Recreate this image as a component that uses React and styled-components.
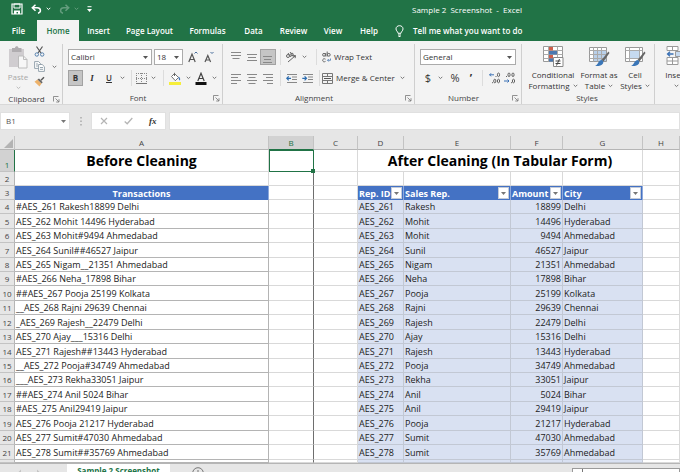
import React from "react";
import styled, { createGlobalStyle, css } from "styled-components";

const GREEN = "#217346";
const BLUE = "#4472c4";
const UI = '"Open Sans", "Noto Sans", sans-serif';

const GlobalStyle = createGlobalStyle`
  * { box-sizing: border-box; }
  body { margin: 0; height: 100vh; overflow: hidden; background: #e6e6e6; font: 8px/12px ${UI}; color: #333; }
  button, input, select { font: inherit; color: inherit; margin: 0; padding: 0; border: 0; border-radius: 0; background: none; }
  svg { display: block; flex: none; }
`;

const Page = styled.div`
  height: 100vh;
  overflow: hidden;
`;

const TitleBar = styled.header`
  height: 20px;
  background: ${GREEN};
  color: #fff;
  display: grid;
  grid-template-columns: 412px 1fr;
  align-items: center;
`;

const QuickAccess = styled.div`
  display: flex;
  align-items: center;
  padding: 0 0 2px 11px;
  gap: 8px;
`;

const QuickButton = styled.button`
  display: flex;
  align-items: center;
  gap: 4px;
  color: #fff;
  opacity: ${(p) => (p.disabled ? 0.3 : 1)};
`;

const WindowTitle = styled.span`
  white-space: pre;
`;

const TabStrip = styled.nav`
  height: 21px;
  background: ${GREEN};
  display: flex;
  align-items: stretch;
`;

const RibbonTab = styled.button`
  flex: none;
  width: ${(p) => p.$w}px;
  white-space: nowrap;
  font-weight: 600;
  color: ${(p) => (p.$active ? GREEN : "#fff")};
  background: ${(p) => (p.$active ? "#f3f3f3" : "transparent")};
`;

const TellMe = styled.button`
  display: flex;
  align-items: center;
  gap: 9px;
  margin-left: 9px;
  color: #fff;
  font-weight: 600;
  white-space: nowrap;
`;

const Ribbon = styled.div`
  display: flex;
  height: 64px;
  padding-top: 3px;
  background: #f3f3f3;
  border-bottom: 1px solid #d8d8d8;
  overflow: hidden;
`;

const Group = styled.section`
  flex: none;
  width: ${(p) => p.$w}px;
  padding: 0 5px;
  display: flex;
  flex-direction: column;
  border-right: 1px solid #cfcfcf;
`;

const GroupBody = styled.div`
  height: 48px;
  display: flex;
  flex-direction: ${(p) => (p.$column ? "column" : "row")};
  gap: ${(p) => (p.$column ? 5 : 0)}px;
  padding-top: ${(p) => (p.$column ? 5 : 0)}px;
`;

const GroupFooter = styled.footer`
  display: grid;
  grid-template-columns: 1fr auto;
  align-items: center;
  text-align: center;
  height: 12px;
  margin: 1px -3px 0 -5px;
  color: #444;
`;

const Launcher = styled.button`
  width: 7px;
`;

const ToolRow = styled.div`
  display: grid;
  grid-template-columns: ${(p) => p.$cols};
  height: 16px;
  align-items: center;
`;

const Tool = styled.button`
  height: 16px;
  display: flex;
  align-items: center;
  justify-content: ${(p) => (p.$start ? "flex-start" : "center")};
  gap: 3px;
  white-space: nowrap;
  ${(p) => p.$pressed && css`background: #c5c5c5; outline: 1px solid #a2a2a2; outline-offset: -1px;`}
  ${(p) => p.$bold && css`font-weight: 700;`}
  ${(p) => p.$italic && css`font: italic 700 9px/12px "Liberation Serif", serif;`}
  ${(p) => p.$underline && css`text-decoration: underline; font-weight: 600;`}
  ${(p) => p.$big && css`font-size: 11px;`}
`;

const Separator = styled.span`
  width: 1px;
  height: 16px;
  background: #dcdcdc;
  justify-self: center;
`;

const Combo = styled.span`
  display: grid;
  height: 16px;
  margin-right: ${(p) => p.$gap || 0}px;
  border: 1px solid #ababab;
  background: #fff;
  align-items: center;
  > * { grid-area: 1 / 1; }
  > svg { justify-self: end; margin-right: 3px; pointer-events: none; }
`;

const ComboSelect = styled.select`
  appearance: none;
  width: 100%;
  height: 14px;
  padding-left: 2px;
`;

const ClipboardTools = styled.div`
  display: flex;
  flex-direction: column;
  padding-left: 3px;
  > button { height: 15px; gap: 7px; }
`;

const BigTool = styled.button`
  width: ${(p) => p.$w}px;
  flex: none;
  display: flex;
  flex-direction: column;
  align-items: center;
  padding-top: 2px;
  line-height: 11px;
  white-space: nowrap;
  color: ${(p) => (p.disabled ? "#a8a8a8" : "#333")};
  > svg { margin-bottom: 2px; }
`;

const BigToolLine = styled.span`
  display: flex;
  align-items: center;
  gap: 3px;
  min-height: 11px;
`;

const FormulaBar = styled.div`
  display: grid;
  grid-template-columns: 70px 21px 75px 1fr;
  height: 31px;
  padding: 7px 0 6px;
`;

const NameBox = styled(Combo)`
  height: 18px;
  border-color: #e0e0e0;
`;

const NameInput = styled.input`
  width: 100%;
  padding-left: 5px;
  color: #555;
`;

const FormulaActions = styled.div`
  display: grid;
  grid-template-columns: repeat(3, 1fr);
  background: #fff;
  border: 1px solid #e0e0e0;
`;

const FormulaInput = styled.input`
  min-width: 0;
  margin-left: 3px;
  background: #fff;
  border: 1px solid #e0e0e0;
`;

const Grip = styled.span`
  place-self: center;
`;

const Sheet = styled.table`
  width: 100%;
  table-layout: fixed;
  border-collapse: separate;
  border-spacing: 0;
  background: #fff;
  font: 9px/13px ${UI};
  color: #222;
`;

const ColumnHead = styled.th`
  height: 14px;
  padding: 0;
  font: 8px/13px ${UI};
  color: ${(p) => (p.$active ? GREEN : "#444")};
  background: ${(p) => (p.$active ? "#d2d2d2" : "#e6e6e6")};
  border-right: 1px solid #c3c3c3;
  border-bottom: 1px solid ${(p) => (p.$active ? GREEN : "#b5b5b5")};
`;

const Corner = styled(ColumnHead)`
  > svg { margin: 2px 0 0 4px; }
`;

const RowHead = styled.th`
  padding: 0;
  font: 8px/12px ${UI};
  text-align: center;
  vertical-align: bottom;
  color: ${(p) => (p.$active ? GREEN : "#444")};
  background: ${(p) => (p.$active ? "#d2d2d2" : "#e6e6e6")};
  border-right: 1px solid ${(p) => (p.$active ? GREEN : "#b5b5b5")};
  border-bottom: 1px solid #c3c3c3;
`;

const Row = styled.tr`
  height: ${(p) => p.$h}px;
`;

const Cell = styled.td`
  padding: 0 1px;
  white-space: nowrap;
  overflow: hidden;
  vertical-align: middle;
  border-right: 1px solid #d9d9d9;
  border-bottom: 1px solid #d9d9d9;
  ${(p) => p.$edge && css`border-right-color: #6e6e6e;`}
  ${(p) => p.$boxed && css`border-color: #b4b4b4;`}
  ${(p) => p.$banded && css`background: #d9e1f2; border-color: #c2c8d4;`}
  ${(p) => p.$number && css`text-align: right;`}
`;

const TitleCell = styled(Cell)`
  font-size: 14px;
  line-height: 20px;
  font-weight: 700;
  color: #000;
  text-align: center;
`;

const SelectedCell = styled(Cell)`
  position: relative;
  overflow: visible;
  border: 0;
  outline: 1px solid ${GREEN};
  outline-offset: -1px;
  &::after {
    content: "";
    position: absolute;
    right: -1px;
    bottom: -1px;
    width: 4px;
    height: 4px;
    background: ${GREEN};
  }
`;

const HeadCell = styled.th`
  padding: 0 1px;
  text-align: ${(p) => (p.$center ? "center" : "left")};
  white-space: nowrap;
  color: #fff;
  background: ${BLUE};
  border-right: 1px solid #8ea9db;
`;

const HeadContent = styled.div`
  display: flex;
  align-items: center;
  justify-content: space-between;
`;

const FilterButton = styled.button`
  width: 11px;
  height: 12px;
  background: #fff;
  border: 1px solid #c4cbd8;
  display: grid;
  place-items: center;
`;

const SheetBar = styled.footer`
  display: grid;
  grid-template-columns: 67px 103px 55px 1fr 108px;
  height: 22px;
  border-top: 1px solid #b5b5b5;
  overflow: hidden;
`;

const SheetArrows = styled.div`
  display: flex;
  justify-content: center;
  gap: 14px;
  padding: 5px 10px 0 0;
`;

const SheetTab = styled.button`
  background: #fff;
  color: ${GREEN};
  font-weight: 700;
  white-space: nowrap;
  align-self: stretch;
  padding-bottom: 7px;
`;

const AddSheet = styled.button`
  align-self: start;
  justify-self: center;
  padding-top: 3px;
`;

const ScrollTrack = styled.div`
  margin-top: 4px;
  height: 14px;
  border: 1px solid #9a9a9a;
  background: #fff;
`;

const ScrollButton = styled.button`
  width: 10px;
  height: 12px;
  display: grid;
  place-items: center;
  border-right: 1px solid #777;
`;

const Chevron = ({ color = "#777" }) => (
  <svg width="5" height="4" viewBox="0 0 5 4"><path d="M.7.8 2.5 2.6 4.3.8" fill="none" stroke={color} /></svg>
);
const Arrow = ({ color = "#555" }) => (
  <svg width="5" height="3" viewBox="0 0 5 3"><path d="M0 0h5L2.500 3z" fill={color} /></svg>
);
const LauncherIcon = () => (
  <svg width="7" height="7" viewBox="0 0 7 7" fill="none" stroke="#777" strokeWidth=".8"><path d="M.5 5.500V.5h5M2.500 2.500 6 6M6 3.200V6H3.200" /></svg>
);
const SaveIcon = () => (
  <svg width="12" height="12" viewBox="0 0 12 12"><path d="M1 1h10v10H1z" fill="none" stroke="#fff" strokeWidth="1.200" /><path d="M3 1h6v4H3z" fill="none" stroke="#fff" /><path d="M3 7.500h6V11H7V9H5.500v2H3z" fill="#fff" /></svg>
);
const UndoIcon = ({ flip }) => (
  <svg width="11" height="10" viewBox="0 0 11 10"><g transform={flip ? "matrix(-1 0 0 1 11 0)" : undefined} fill="none" stroke="#fff" strokeWidth="1.500"><path d="M4.500.7 1.300 3.700l3.200 3M1.500 3.700h4.700c4 0 4.300 4.600.8 5.500" /></g></svg>
);
const CustomizeIcon = () => (
  <svg width="5" height="6" viewBox="0 0 5 6"><path d="M.5.7h4" stroke="#fff" /><path d="M0 3h5L2.500 6z" fill="#fff" /></svg>
);
const BulbIcon = () => (
  <svg width="9" height="12" viewBox="0 0 9 12" fill="none" stroke="#fff"><path d="M3 8.300C3 6.500 1 6 1 3.900 1 1.900 2.600.7 4.500.7S8 1.900 8 3.900C8 6 6 6.500 6 8.300zM3 10h3M3.500 11.500h2" /></svg>
);
const PasteIcon = () => (
  <svg width="20" height="23" viewBox="0 0 20 23"><path d="M1 3h15v18H1z" fill="#d0cdd0" /><path d="M4 2h3c0-2.500 3.500-2.500 3.500 0h3v4H4z" fill="#b0adb0" /><path d="M10.500 10h5l3.500 3.500v8.500h-8.500z" fill="#f7f7f7" stroke="#bdbdbd" /><path d="M15.500 10v3.500H19" fill="none" stroke="#bdbdbd" /></svg>
);
const CutIcon = () => (
  <svg width="11" height="11" viewBox="0 0 11 11" fill="none"><path d="M2.500.5 7 7M8.500.5 4 7" stroke="#555" strokeWidth="1.200" /><circle cx="2.800" cy="8.500" r="1.700" stroke="#5580ad" /><circle cx="8.200" cy="8.500" r="1.700" stroke="#5580ad" /></svg>
);
const CopyIcon = () => (
  <svg width="11" height="11" viewBox="0 0 11 11" fill="#fff" stroke="#8a9aa5" strokeWidth=".9"><path d="M.6.6h4l1.800 1.800v5H.6z" /><path d="M4.600 3.500h3.600l2.200 2.200v4.700H4.600zM6 6.500h3M6 8.300h3M2 3h2M2 5h2" /></svg>
);
const BrushIcon = () => (
  <svg width="11" height="11" viewBox="0 0 11 11"><path d="m.5 5.800 3-2.300 4 4-2 3z" fill="#edb26b" /><path d="m3.500 3.500 1.500-1 3.700 3.700-1.200 1.300z" fill="#666" /><path d="m6.500 3.800 3-3 1 1-3 3z" fill="#555" /></svg>
);
const GrowFont = ({ shrink }) => (
  <svg width="10" height="12" viewBox="0 0 10 12" fill="none" stroke="#555"><path d={shrink ? "M1 11 3.800 4.500 6.600 11M2 9h3.600" : "M.8 11 4 3l3.200 8M2 8.500h4"} strokeWidth="1.200" /><path d={shrink ? "M6.500 1 8 2.500 9.500 1" : "M6.500 2.500 8 1l1.500 1.500"} stroke="#4a6f9c" /></svg>
);
const BordersIcon = () => (
  <svg width="11" height="11" viewBox="0 0 11 11" fill="none" stroke="#888"><path d="M.5 0v11M5.500 0v11M10.500 0v11M0 .5h11M0 5.500h11" strokeDasharray="1 1" /><path d="M0 10.500h11" stroke="#777" /></svg>
);
const FillIcon = () => (
  <svg width="12" height="13" viewBox="0 0 12 13"><path d="m2.500 4.500 3-3 4 4-3.200 3.200z" fill="#fff" stroke="#666" strokeWidth=".9" /><path d="M5.500 4V.8" stroke="#666" /><path d="M9.500 4.500c2 1.500 2 3 1.200 4-.8-.5-1.200-2-1.200-4z" fill="#3a71b5" /><path d="M0 10h12v3H0z" fill="#f6ee3a" /></svg>
);
const FontColorIcon = () => (
  <svg width="12" height="13" viewBox="0 0 12 13"><path d="M2.800 9 6 1.200 9.200 9M4 6.500h4" fill="none" stroke="#444" strokeWidth="1.200" /><path d="M.5 10h11v3H.5z" fill="#111" /></svg>
);
const LINES = {
  top: "M0 1.500h10M0 4.500h10M1.500 7.500h7",
  middle: "M0 3.500h10M1 6.500h8M0 9.500h10",
  bottom: "M0 5.500h9M1 8.500h7M0 11.500h9",
  left: "M0 2.500h10M0 5.500h7M0 8.500h10M0 11.500h6",
  center: "M0 2.500h10M1.500 5.500h7M0 8.500h10M1.500 11.500h7",
  right: "M0 2.500h10M3 5.500h7M0 8.500h10M4 11.500h6",
};
const AlignIcon = ({ kind }) => (
  <svg width="10" height="13" viewBox="0 0 10 13"><path d={LINES[kind]} stroke="#888" fill="none" /></svg>
);
const OrientationIcon = () => (
  <svg width="12" height="12" viewBox="0 0 12 12" fill="none" stroke="#666"><circle cx="3" cy="5" r="1.500" /><path d="m3 2 3 4M5 1l3.500 4.500" /><circle cx="7" cy="3.500" r="1.300" /><path d="m3 11 7-6M7.800 4.800l2.700-.3-.4 2.700" /></svg>
);
const IndentIcon = ({ out }) => (
  <svg width="12" height="11" viewBox="0 0 12 11" fill="none"><path d="M1 1.500h10M6 4h5M6 6.500h5M1 9.500h10" stroke="#888" /><path d={out ? "M5 5.300H1M2.700 3.300.8 5.300l1.900 2" : "M.3 5.300h4M2.600 3.300l1.900 2-1.900 2"} stroke="#2b6cb0" strokeWidth="1.200" /></svg>
);
const WrapIcon = () => (
  <svg width="9" height="12" viewBox="0 0 9 12" fill="none" stroke="#666"><circle cx="2" cy="3.800" r="1.400" /><path d="M3.700 2v3.500M5.200.5v5" /><circle cx="6.800" cy="3.800" r="1.400" /><path d="M3.500 8.200C2 7.200.7 8 .7 9.300s1.300 2 2.800 1.100" /><path d="M8.500 7.500v1.800h-3M6.800 8 5.500 9.300l1.300 1.300" stroke="#4a7ab0" strokeWidth=".8" /></svg>
);
const MergeIcon = () => (
  <svg width="11" height="11" viewBox="0 0 11 11" fill="none" stroke="#777"><path d="M.5.5h10v10H.5zM.5 3.500h10M.5 7.500h10M5.500.5v3M5.500 7.500v3" /><path d="M2 5.500h7" stroke="#555" /></svg>
);
const DecimalIcon = ({ less }) => (
  <svg width="12" height="12" viewBox="0 0 12 12" fill="none">
    <g stroke="#555" strokeWidth=".9">
      {less ? <><ellipse cx="5" cy="2.800" rx="1.100" ry="1.800" /><ellipse cx="9" cy="2.800" rx="1.100" ry="1.800" /><ellipse cx="9.500" cy="9" rx="1.100" ry="1.800" /><path d="M2 4.500h1M7 10.700h1" /></> : <><ellipse cx="9.500" cy="2.800" rx="1.100" ry="1.800" /><ellipse cx="5.800" cy="9" rx="1.100" ry="1.800" /><ellipse cx="9.500" cy="9" rx="1.100" ry="1.800" /><path d="M6.500 4.500h1M3 10.700h1" /></>}
    </g>
    <path d={less ? "M0 9h5M3.500 7.500 5 9l-1.500 1.500" : "M5 2.800H.6M2 1.300.6 2.800 2 4.300"} stroke="#3a71b5" />
  </svg>
);
const ConditionalIcon = () => (
  <svg width="21" height="21" viewBox="0 0 21 21" fill="none"><path d="M.5.5h19v15H.5z" fill="#fff" stroke="#999" /><path d="M5.500.5v15M14.500.5v15M.5 4.500h19M.5 8.500h19M.5 12.500h19" stroke="#aaa" /><path d="M6 1h4v3.500H6zM6 9h4v3.500H6z" fill="#cf5f4b" /><path d="M6 5h8v3.500H6zM6 12.500h5v3H6z" fill="#4a78b0" /><path d="M10.500 11.500h9.500v9h-9.500z" fill="#fff" stroke="#888" /><path d="M12.500 15h5M12.500 17.500h5M16.500 13l-3 6.500" stroke="#444" /></svg>
);
const TableStyleIcon = ({ cell }) => (
  <svg width="21" height="21" viewBox="0 0 21 21" fill="none"><path d="M.5 1.500h17v14H.5z" fill="#fff" stroke="#999" />{cell ? <path d="M4 5h10v7H4z" fill="#c6daf0" /> : <path d="M5 5h12v10H5z" fill="#b9d0ea" />}<path d={cell ? "M4.500 1.500v14M14.500 1.500v14M.5 4.500h17M.5 12.500h17" : "M4.500 1.500v14M8.500 1.500v14M12.500 1.500v14M.5 4.500h17M.5 8.500h17M.5 12.500h17"} stroke="#aaa" /><path d="M19.500 5.500 20.500 7l-6 8.500-2-1.500z" fill="#666" /><path d="M12.300 14c2 .3 2.500 2 1.700 3.500-1.500 2.500-5 2.800-8 2.500 3-1 3-5 6.300-6z" fill="#3a76b8" /></svg>
);
const InsertIcon = () => (
  <svg width="20" height="21" viewBox="0 0 20 21" fill="#fff" stroke="#999"><path d="M1 .5h11v4H1zM6.500.5v4M1 11.500h11v7H1zM6.500 11.500v7M1 15h11" /><path d="M9.500 5.500H20v5H9.500z" fill="#c6daf0" /><path d="M7.500 8H1.500M4 5.700 1.500 8 4 10.300" fill="none" stroke="#3a71b5" strokeWidth="1.300" /></svg>
);
const CancelIcon = () => (
  <svg width="8" height="8" viewBox="0 0 8 8"><path d="m1 1 6 6M7 1 1 7" stroke="#b5b5b5" strokeWidth="1.200" /></svg>
);
const CheckIcon = () => (
  <svg width="9" height="8" viewBox="0 0 9 8"><path d="m.7 4.500 2.500 2.300L8.300 1" fill="none" stroke="#b5b5b5" strokeWidth="1.300" /></svg>
);
const GripIcon = () => (
  <svg width="2" height="10" viewBox="0 0 2 10"><path d="M1 1v9" stroke="#aaa" strokeWidth="1.500" strokeDasharray="1.500 2" /></svg>
);
const CornerIcon = () => (
  <svg width="9" height="9" viewBox="0 0 9 9"><path d="M9 0v9H0z" fill="#b3b3b3" /></svg>
);
const SheetArrow = ({ right, color = "#c4c4c4" }) => (
  <svg width="5" height="7" viewBox="0 0 5 7"><path d={right ? "M1 .5v6l3-3z" : "M4 .5v6l-3-3z"} fill={color} /></svg>
);
const AddIcon = () => (
  <svg width="12" height="12" viewBox="0 0 12 12" fill="none" stroke="#777"><circle cx="6" cy="6" r="5.300" /><path d="M6 3v6M3 6h6" /></svg>
);

const TABS = [["File", 37], ["Home", 42], ["Insert", 39], ["Page Layout", 63], ["Formulas", 53], ["Data", 39], ["Review", 41], ["View", 38], ["Help", 34]];
const WIDTHS = [15, 254, 45, 44, 46, 107, 52, 80];
const ROWS = [
  ["#AES_261 Rakesh18899 Delhi", "AES_261", "Rakesh", 18899, "Delhi"],
  ["AES_262 Mohit 14496 Hyderabad", "AES_262", "Mohit", 14496, "Hyderabad"],
  ["AES_263 Mohit#9494 Ahmedabad", "AES_263", "Mohit", 9494, "Ahmedabad"],
  ["AES_264 Sunil##46527 Jaipur", "AES_264", "Sunil", 46527, "Jaipur"],
  ["AES_265 Nigam__21351 Ahmedabad", "AES_265", "Nigam", 21351, "Ahmedabad"],
  ["#AES_266 Neha_17898 Bihar", "AES_266", "Neha", 17898, "Bihar"],
  ["##AES_267 Pooja 25199 Kolkata", "AES_267", "Pooja", 25199, "Kolkata"],
  ["__AES_268 Rajni 29639 Chennai", "AES_268", "Rajni", 29639, "Chennai"],
  ["_AES_269 Rajesh__22479 Delhi", "AES_269", "Rajesh", 22479, "Delhi"],
  ["AES_270 Ajay___15316 Delhi", "AES_270", "Ajay", 15316, "Delhi"],
  ["AES_271 Rajesh##13443 Hyderabad", "AES_271", "Rajesh", 13443, "Hyderabad"],
  ["__AES_272 Pooja#34749 Ahmedabad", "AES_272", "Pooja", 34749, "Ahmedabad"],
  ["___AES_273 Rekha33051 Jaipur", "AES_273", "Rekha", 33051, "Jaipur"],
  ["##AES_274 Anil 5024 Bihar", "AES_274", "Anil", 5024, "Bihar"],
  ["#AES_275 Anil29419 Jaipur", "AES_275", "Anil", 29419, "Jaipur"],
  ["AES_276 Pooja 21217 Hyderabad", "AES_276", "Pooja", 21217, "Hyderabad"],
  ["AES_277 Sumit#47030 Ahmedabad", "AES_277", "Sumit", 47030, "Ahmedabad"],
  ["AES_278 Sumit##35769 Ahmedabad", "AES_278", "Sumit", 35769, "Ahmedabad"],
];
const rowHeight = (i) => (i % 7 === 1 || i % 7 === 3 || i % 7 === 6 ? 15 : 14);

const Footer = ({ label, launcher = true }) => (
  <GroupFooter>
    <span>{label}</span>
    {launcher && <Launcher aria-label={`${label} settings`}><LauncherIcon /></Launcher>}
  </GroupFooter>
);
const DropTool = ({ label }) => <Tool aria-label={label}><Chevron /></Tool>;
const Dropdown = ({ label, value, gap }) => (
  <Combo $gap={gap}>
    <ComboSelect aria-label={label} defaultValue={value}><option>{value}</option></ComboSelect>
    <Arrow />
  </Combo>
);
const FilterHead = ({ children }) => (
  <HeadCell scope="col">
    <HeadContent>{children}<FilterButton aria-label={`Filter ${children}`}><Arrow color="#777" /></FilterButton></HeadContent>
  </HeadCell>
);

function RibbonPanel() {
  return (
    <Ribbon>
      <Group $w={63}>
        <GroupBody>
          <BigTool $w={26} disabled>
            <PasteIcon />
            <BigToolLine>Paste</BigToolLine>
            <BigToolLine><Chevron color="#bbb" /></BigToolLine>
          </BigTool>
          <ClipboardTools>
            <Tool $start aria-label="Cut"><CutIcon /></Tool>
            <Tool $start aria-label="Copy"><CopyIcon /><Chevron /></Tool>
            <Tool $start aria-label="Format Painter"><BrushIcon /></Tool>
          </ClipboardTools>
        </GroupBody>
        <Footer label="Clipboard" />
      </Group>
      <Group $w={160}>
        <GroupBody $column>
          <ToolRow $cols="86px 31px 16px 16px">
            <Dropdown label="Font" value="Calibri" gap={2} />
            <Dropdown label="Font size" value="18" gap={2} />
            <Tool aria-label="Increase font size"><GrowFont /></Tool>
            <Tool aria-label="Decrease font size"><GrowFont shrink /></Tool>
          </ToolRow>
          <ToolRow $cols="15px 18px 16px 10px 8px 12px 12px 8px 16px 10px 16px 10px">
            <Tool $pressed $bold>B</Tool>
            <Tool $italic>I</Tool>
            <Tool $underline>U</Tool>
            <DropTool label="Underline options" />
            <Separator />
            <Tool aria-label="Borders"><BordersIcon /></Tool>
            <DropTool label="Border options" />
            <Separator />
            <Tool aria-label="Fill color"><FillIcon /></Tool>
            <DropTool label="Fill options" />
            <Tool aria-label="Font color"><FontColorIcon /></Tool>
            <DropTool label="Font color options" />
          </ToolRow>
        </GroupBody>
        <Footer label="Font" />
      </Group>
      <Group $w={192}>
        <GroupBody $column>
          <ToolRow $cols="16px 16px 16px 8px 14px 12px 12px 1fr">
            <Tool aria-label="Top align"><AlignIcon kind="top" /></Tool>
            <Tool aria-label="Middle align"><AlignIcon kind="middle" /></Tool>
            <Tool $pressed aria-label="Bottom align"><AlignIcon kind="bottom" /></Tool>
            <Separator />
            <Tool aria-label="Orientation"><OrientationIcon /></Tool>
            <DropTool label="Orientation options" />
            <Separator />
            <Tool $start><WrapIcon />Wrap Text</Tool>
          </ToolRow>
          <ToolRow $cols="16px 16px 16px 8px 16px 16px 6px 1fr 16px">
            <Tool aria-label="Align left"><AlignIcon kind="left" /></Tool>
            <Tool aria-label="Center"><AlignIcon kind="center" /></Tool>
            <Tool aria-label="Align right"><AlignIcon kind="right" /></Tool>
            <Separator />
            <Tool aria-label="Decrease indent"><IndentIcon out /></Tool>
            <Tool aria-label="Increase indent"><IndentIcon /></Tool>
            <Separator />
            <Tool $start><MergeIcon />Merge &amp; Center</Tool>
            <DropTool label="Merge options" />
          </ToolRow>
        </GroupBody>
        <Footer label="Alignment" />
      </Group>
      <Group $w={107}>
        <GroupBody $column>
          <ToolRow $cols="1fr"><Dropdown label="Number format" value="General" /></ToolRow>
          <ToolRow $cols="16px 9px 20px 12px 10px 16px 1fr">
            <Tool $big>$</Tool>
            <DropTool label="Accounting options" />
            <Tool $big>%</Tool>
            <Tool $big $bold aria-label="Comma style">’</Tool>
            <Separator />
            <Tool aria-label="Increase decimal"><DecimalIcon /></Tool>
            <Tool aria-label="Decrease decimal"><DecimalIcon less /></Tool>
          </ToolRow>
        </GroupBody>
        <Footer label="Number" />
      </Group>
      <Group $w={133}>
        <GroupBody>
          <BigTool $w={52}>
            <ConditionalIcon />
            <BigToolLine>Conditional</BigToolLine>
            <BigToolLine>Formatting <Chevron /></BigToolLine>
          </BigTool>
          <BigTool $w={40}>
            <TableStyleIcon />
            <BigToolLine>Format as</BigToolLine>
            <BigToolLine>Table <Chevron /></BigToolLine>
          </BigTool>
          <BigTool $w={32}>
            <TableStyleIcon cell />
            <BigToolLine>Cell</BigToolLine>
            <BigToolLine>Styles <Chevron /></BigToolLine>
          </BigTool>
        </GroupBody>
        <Footer label="Styles" launcher={false} />
      </Group>
      <Group $w={100}>
        <GroupBody>
          <BigTool $w={32}>
            <InsertIcon />
            <BigToolLine>Insert</BigToolLine>
            <BigToolLine><Chevron /></BigToolLine>
          </BigTool>
        </GroupBody>
      </Group>
    </Ribbon>
  );
}

function Worksheet() {
  return (
    <Sheet>
      <colgroup>
        {WIDTHS.map((w, i) => <col key={i} width={w} />)}
        <col />
      </colgroup>
      <thead>
        <tr>
          <Corner aria-label="Select all"><CornerIcon /></Corner>
          {"ABCDEFGH".split("").map((c) => <ColumnHead key={c} scope="col" $active={c === "B"}>{c}</ColumnHead>)}
        </tr>
      </thead>
      <tbody>
        <Row $h={22}>
          <RowHead scope="row" $active>1</RowHead>
          <TitleCell>Before Cleaning</TitleCell>
          <SelectedCell />
          <Cell />
          <TitleCell colSpan={4}>After Cleaning (In Tabular Form)</TitleCell>
          <Cell />
        </Row>
        <Row $h={14}>
          <RowHead scope="row">2</RowHead>
          <Cell /><Cell $edge /><Cell /><Cell /><Cell /><Cell /><Cell /><Cell />
        </Row>
        <Row $h={14}>
          <RowHead scope="row">3</RowHead>
          <HeadCell scope="col" $center>Transactions</HeadCell>
          <Cell $edge /><Cell />
          <FilterHead>Rep. ID</FilterHead>
          <FilterHead>Sales Rep.</FilterHead>
          <FilterHead>Amount</FilterHead>
          <FilterHead>City</FilterHead>
          <Cell />
        </Row>
        {ROWS.map(([raw, id, name, amount, city], i) => (
          <Row key={id} $h={rowHeight(i)}>
            <RowHead scope="row">{i + 4}</RowHead>
            <Cell $boxed>{raw}</Cell>
            <Cell $edge /><Cell />
            <Cell $banded>{id}</Cell>
            <Cell $banded>{name}</Cell>
            <Cell $banded $number>{amount}</Cell>
            <Cell $banded>{city}</Cell>
            <Cell />
          </Row>
        ))}
        <Row $h={3}>
          <RowHead />
          <Cell $boxed /><Cell $edge /><Cell />
          <Cell $banded /><Cell $banded /><Cell $banded /><Cell $banded /><Cell />
        </Row>
      </tbody>
    </Sheet>
  );
}

export default function App() {
  return (
    <Page>
      <GlobalStyle />
      <TitleBar>
        <QuickAccess>
          <QuickButton aria-label="Save"><SaveIcon /></QuickButton>
          <QuickButton aria-label="Undo"><UndoIcon /><Chevron color="#fff" /></QuickButton>
          <QuickButton aria-label="Redo" disabled><UndoIcon flip /><Chevron color="#fff" /></QuickButton>
          <QuickButton aria-label="Customize toolbar"><CustomizeIcon /></QuickButton>
        </QuickAccess>
        <WindowTitle>{"Sample 2  Screenshot  -  Excel"}</WindowTitle>
      </TitleBar>
      <TabStrip>
        {TABS.map(([name, w]) => <RibbonTab key={name} $w={w} $active={name === "Home"}>{name}</RibbonTab>)}
        <TellMe><BulbIcon />Tell me what you want to do</TellMe>
      </TabStrip>
      <RibbonPanel />
      <FormulaBar>
        <NameBox><NameInput aria-label="Name box" defaultValue="B1" /><Arrow color="#777" /></NameBox>
        <Grip><GripIcon /></Grip>
        <FormulaActions>
          <Tool aria-label="Cancel"><CancelIcon /></Tool>
          <Tool aria-label="Enter"><CheckIcon /></Tool>
          <Tool $italic aria-label="Insert function">fx</Tool>
        </FormulaActions>
        <FormulaInput aria-label="Formula" />
      </FormulaBar>
      <Worksheet />
      <SheetBar>
        <SheetArrows><SheetArrow /><SheetArrow right /></SheetArrows>
        <SheetTab>Sample 2 Screenshot</SheetTab>
        <AddSheet aria-label="New sheet"><AddIcon /></AddSheet>
        <span />
        <ScrollTrack><ScrollButton aria-label="Scroll left"><SheetArrow color="#555" /></ScrollButton></ScrollTrack>
      </SheetBar>
    </Page>
  );
}
